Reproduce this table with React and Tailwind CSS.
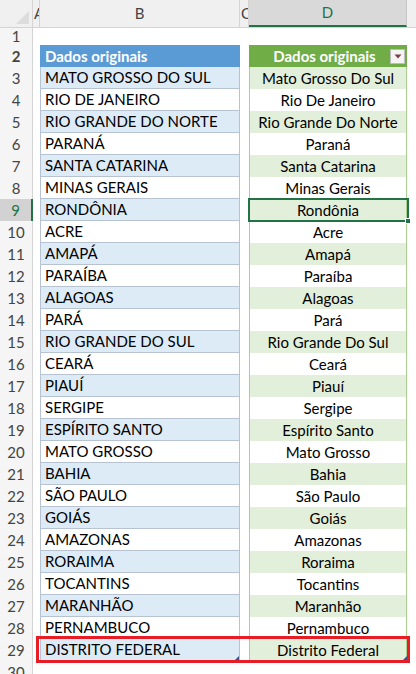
import React from "react";

const estados = [
  "MATO GROSSO DO SUL",
  "RIO DE JANEIRO",
  "RIO GRANDE DO NORTE",
  "PARANÁ",
  "SANTA CATARINA",
  "MINAS GERAIS",
  "RONDÔNIA",
  "ACRE",
  "AMAPÁ",
  "PARAÍBA",
  "ALAGOAS",
  "PARÁ",
  "RIO GRANDE DO SUL",
  "CEARÁ",
  "PIAUÍ",
  "SERGIPE",
  "ESPÍRITO SANTO",
  "MATO GROSSO",
  "BAHIA",
  "SÃO PAULO",
  "GOIÁS",
  "AMAZONAS",
  "RORAIMA",
  "TOCANTINS",
  "MARANHÃO",
  "PERNAMBUCO",
  "DISTRITO FEDERAL",
];

// =PRI.MAIÚSCULA()
const proper = (s) =>
  s
    .toLowerCase()
    .split(" ")
    .map((w) => w.charAt(0).toUpperCase() + w.slice(1))
    .join(" ");

function RowHead({ n, active }) {
  return (
    <div
      className={
        "w-[33px] shrink-0 flex items-center justify-center text-[15px] border-r " +
        (active
          ? "bg-[#d2d2d2] text-[#217346] border-[#217346] border-r-2"
          : "bg-[#f5f5f5] text-[#444] border-[#d4d4d4]")
      }
    >
      {n}
    </div>
  );
}

function Row({ n, b, d, band, active }) {
  return (
    <div className="flex h-[22px]">
      <RowHead n={n} active={active} />
      <div className="w-[7px] shrink-0" />
      <div
        className={
          "w-[200px] shrink-0 flex items-center pl-[4px] border-l border-r border-b border-[#b7c3d0] text-black " +
          (band ? "bg-[#ddebf7]" : "bg-white")
        }
      >
        {b}
      </div>
      <div className="w-[9px] shrink-0" />
      <div
        className={
          "w-[158px] shrink-0 flex items-center justify-center border-l border-r border-[#a9d08e] text-black " +
          (band ? "bg-[#e2efda]" : "bg-white")
        }
      >
        {d}
      </div>
      <div className="flex-1" />
    </div>
  );
}

export default function App() {
  return (
    <div className="relative w-[416px] h-[674px] overflow-hidden bg-white text-[15px] font-['Lato',sans-serif] leading-none">
      {/* column headers */}
      <div className="flex h-[28px] bg-[#f0f0f0] border-b border-[#d4d4d4] text-[#444]">
        <div className="w-[33px] shrink-0 relative border-r border-[#d4d4d4]">
          <div className="absolute right-[3px] bottom-[3px] w-0 h-0 border-l-[13px] border-l-transparent border-b-[13px] border-b-[#dcdcdc]" />
        </div>
        <div className="w-[7px] shrink-0 overflow-hidden flex items-center border-r border-[#d4d4d4]">
          <span className="pl-[1px]">A</span>
        </div>
        <div className="w-[200px] shrink-0 flex items-center justify-center border-r border-[#d4d4d4]">
          B
        </div>
        <div className="w-[9px] shrink-0 overflow-hidden flex items-center border-r border-[#d4d4d4]">
          <span className="pl-[1px]">C</span>
        </div>
        <div className="w-[158px] shrink-0 flex items-center justify-center bg-[#d9d9d9] text-[#217346] border-b-2 border-[#217346] border-r border-r-[#c6c6c6]">
          D
        </div>
        <div className="flex-1" />
      </div>

      {/* row 1 */}
      <div className="flex h-[17px]">
        <RowHead n={1} />
        <div className="flex-1" />
      </div>

      {/* row 2: table headers */}
      <div className="flex h-[22px] font-bold text-white">
        <RowHead n={2} />
        <div className="w-[7px] shrink-0" />
        <div className="w-[200px] shrink-0 flex items-center pl-[5px] bg-[#5b9bd5]">
          Dados originais
        </div>
        <div className="w-[9px] shrink-0" />
        <div className="w-[158px] shrink-0 flex items-center bg-[#70ad47] pr-[2px]">
          <span className="flex-1 text-center pl-[10px]">Dados originais</span>
          <span className="w-[15px] h-[15px] bg-[#f4f4f4] border border-[#bdbdbd] flex items-center justify-center">
            <svg width="8" height="5" viewBox="0 0 8 5">
              <path d="M0.5 0.5 L7.5 0.5 L4 4.5 Z" fill="#7a3f46" />
            </svg>
          </span>
        </div>
        <div className="flex-1" />
      </div>

      {estados.map((e, i) => (
        <Row
          key={e}
          n={i + 3}
          b={e}
          d={proper(e)}
          band={i % 2 === 0}
          active={i + 3 === 9}
        />
      ))}

      {/* row 30 */}
      <div className="flex h-[22px]">
        <RowHead n={30} />
        <div className="flex-1" />
      </div>

      {/* D9 selection */}
      <div className="absolute left-[248px] top-[198px] w-[161px] h-[24px] border-2 border-[#217346]" />
      <div className="absolute left-[405px] top-[218px] w-[6px] h-[6px] bg-[#217346] border border-white" />

      {/* table resize handles */}
      <div className="absolute left-[235px] top-[656px] w-0 h-0 border-l-[4px] border-l-transparent border-b-[4px] border-b-[#2f5597]" />
      <div className="absolute left-[403px] top-[656px] w-0 h-0 border-l-[4px] border-l-transparent border-b-[4px] border-b-[#2f5597]" />

      {/* highlight */}
      <div className="absolute left-[36px] top-[636px] w-[374px] h-[27px] border-[3px] border-[#e81c24]" />
    </div>
  );
}
